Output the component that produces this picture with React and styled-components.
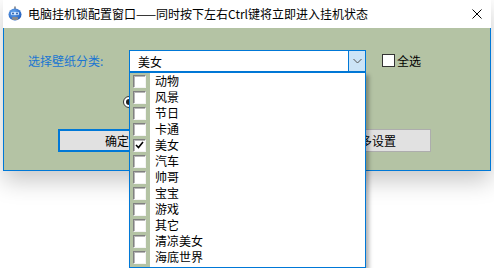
import React from "react";
import styled, { createGlobalStyle } from "styled-components";

const Global = createGlobalStyle`
  html, body { margin: 0; padding: 0; background: #ffffff; }
  body { font-family: "Noto Sans CJK SC", "Microsoft YaHei", sans-serif; font-size: 12px; color: #000; }
`;

const BLUE = "#0078d7";
const GREEN = "#b4c3a4";

const Page = styled.div`
  width: 494px;
  height: 268px;
  overflow: hidden;
  background: #fff;
  position: relative;
`;

const Frame = styled.div`
  margin-left: 3px;
  width: 488px;
  box-shadow: 0 10px 22px rgba(0, 0, 0, 0.22);
  position: relative;
`;

const TitleBar = styled.div`
  height: 28px;
  background: #fff;
  display: flex;
  align-items: center;
  padding-left: 4px;
  box-sizing: border-box;
`;

const TitleText = styled.span`
  margin-left: 5px;
  font-size: 12px;
  line-height: 14px;
  white-space: nowrap;
  flex: 1;
`;

const CloseBtn = styled.div`
  width: 28px;
  height: 28px;
  display: flex;
  align-items: center;
  justify-content: center;
`;

const Client = styled.div`
  position: relative;
  height: 142px;
  background: ${GREEN};
  border: 1px solid ${BLUE};
  border-top: none;
  box-sizing: content-box;
  display: flex;
  flex-direction: column;
`;

const Row = styled.div`
  display: flex;
  align-items: center;
  padding-left: ${(p) => p.$pl || 0}px;
  margin-top: ${(p) => p.$mt || 0}px;
  height: ${(p) => p.$h}px;
`;

const Label = styled.span`
  width: 101px;
  color: #1b76d2;
  font-size: 12px;
  line-height: 14px;
`;

const Combo = styled.div`
  width: 237px;
  height: 22px;
  box-sizing: border-box;
  border: 1px solid ${BLUE};
  background: #fff;
  display: flex;
  align-items: stretch;
`;

const ComboText = styled.span`
  flex: 1;
  padding-left: 8px;
  display: flex;
  align-items: center;
  font-size: 12px;
`;

const ComboButton = styled.span`
  width: 16px;
  background: #cce4f7;
  border-left: 1px solid ${BLUE};
  display: flex;
  align-items: center;
  justify-content: center;
`;

const CheckWrap = styled.label`
  display: flex;
  align-items: center;
  margin-left: 16px;
  font-size: 12px;
  gap: 2px;
  margin-top: -2px;
`;

const FlatBox = styled.span`
  width: 13px;
  height: 13px;
  box-sizing: border-box;
  border: 1px solid #333;
  background: #fff;
`;

const Radio = styled.span`
  width: 12px;
  height: 12px;
  box-sizing: border-box;
  border-radius: 50%;
  border: 1px solid #333;
  background: #fff;
  display: flex;
  align-items: center;
  justify-content: center;
  &::after {
    content: "";
    width: 6px;
    height: 6px;
    border-radius: 50%;
    background: #222;
  }
`;

const Button = styled.div`
  width: 118px;
  height: 23px;
  box-sizing: border-box;
  background: #e1e1e1;
  border: ${(p) => (p.$focused ? `2px solid ${BLUE}` : "1px solid #adadad")};
  margin-left: ${(p) => p.$ml || 0}px;
  display: flex;
  align-items: center;
  justify-content: center;
  font-size: 12px;
`;

const Popup = styled.div`
  position: absolute;
  left: 125px;
  top: 44px;
  width: 237px;
  height: 196px;
  box-sizing: border-box;
  border: 1px solid ${BLUE};
  background: linear-gradient(to right, ${GREEN} 20px, #ffffff 20px);
  box-shadow: 3px 3px 4px rgba(0, 0, 0, 0.3);
  z-index: 5;
`;

const Item = styled.div`
  height: 16px;
  display: flex;
  align-items: center;
`;

const Box3D = styled.span`
  width: 13px;
  height: 13px;
  box-sizing: border-box;
  margin-left: 3px;
  border-top: 1px solid #808080;
  border-left: 1px solid #808080;
  border-right: 1px solid #f4f4f4;
  border-bottom: 1px solid #f4f4f4;
  box-shadow: inset 1px 1px 0 #b8b8b8;
  background: #fff;
  display: flex;
  align-items: center;
  justify-content: center;
  flex-shrink: 0;
`;

const ItemText = styled.span`
  margin-left: 9px;
  font-size: 12px;
  line-height: 14px;
`;

const Icon = () => (
  <svg width="16" height="16" viewBox="0 0 16 16">
    <defs>
      <radialGradient id="g" cx="0.4" cy="0.35" r="0.7">
        <stop offset="0" stopColor="#6fb0f5" />
        <stop offset="1" stopColor="#1d58b8" />
      </radialGradient>
    </defs>
    <rect x="7" y="0.5" width="2" height="3" fill="#9a9a9a" />
    <ellipse cx="8" cy="8.5" rx="6.5" ry="6" fill="url(#g)" />
    <rect x="4" y="6" width="8" height="3" rx="1" fill="#cfe6ff" />
    <circle cx="6" cy="7.5" r="0.9" fill="#1d4f9e" />
    <circle cx="10" cy="7.5" r="0.9" fill="#1d4f9e" />
    <rect x="5" y="11" width="6" height="3" rx="1" fill="#8a8a8a" />
  </svg>
);

const items = ["动物", "风景", "节日", "卡通", "美女", "汽车", "帅哥", "宝宝", "游戏", "其它", "清凉美女", "海底世界"];

export default function App() {
  return (
    <Page>
      <Global />
      <Frame>
        <TitleBar>
          <Icon />
          <TitleText>电脑挂机锁配置窗口——同时按下左右Ctrl键将立即进入挂机状态</TitleText>
          <CloseBtn>
            <svg width="10" height="10" viewBox="0 0 10 10">
              <path d="M0.5 0.5 L9.5 9.5 M9.5 0.5 L0.5 9.5" stroke="#000" strokeWidth="1" />
            </svg>
          </CloseBtn>
        </TitleBar>
        <Client>
          <Row $pl={24} $mt={22} $h={22}>
            <Label>选择壁纸分类:</Label>
            <Combo>
              <ComboText>美女</ComboText>
              <ComboButton>
                <svg width="9" height="6" viewBox="0 0 9 6">
                  <path d="M0.5 1 L4.5 5 L8.5 1" stroke="#555" strokeWidth="1" fill="none" />
                </svg>
              </ComboButton>
            </Combo>
            <CheckWrap>
              <FlatBox />
              全选
            </CheckWrap>
          </Row>
          <Row $pl={119} $mt={24} $h={12}>
            <Radio />
          </Row>
          <Row $pl={54} $mt={21} $h={23}>
            <Button $focused>确定</Button>
            <Button $ml={137}>更多设置</Button>
          </Row>
          <Popup>
            {items.map((t) => (
              <Item key={t}>
                <Box3D>
                  {t === "美女" && (
                    <svg width="9" height="8" viewBox="0 0 9 8">
                      <path d="M1 4 L3.5 6.5 L8 1" stroke="#000" strokeWidth="1.6" fill="none" />
                    </svg>
                  )}
                </Box3D>
                <ItemText>{t}</ItemText>
              </Item>
            ))}
          </Popup>
        </Client>
      </Frame>
    </Page>
  );
}
